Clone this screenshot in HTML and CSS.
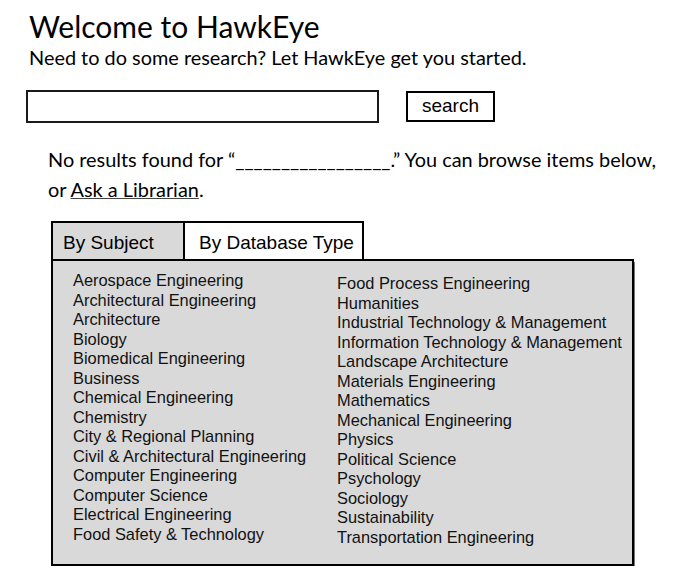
FILE: index.html
```html
<!DOCTYPE html>
<html>
<head>
<meta charset="utf-8">
<link rel="stylesheet" href="styles.css">
</head>
<body>
<div class="page">
  <h1 class="title">Welcome to HawkEye</h1>
  <p class="subtitle">Need to do some research? Let HawkEye get you started.</p>
  <div class="search-row">
    <div class="search-input"></div>
    <div class="search-btn">search</div>
  </div>
  <p class="notice">No results found for “_________________.” You can browse items below,<br>or <a class="link" href="#">Ask a Librarian</a>.</p>
  <div class="browser">
    <div class="tabs">
      <div class="tab tab-active">By Subject</div>
      <div class="tab tab-other">By Database Type</div>
      <div class="tab-fill"></div>
    </div>
    <div class="panel">
      <ul class="col col-left">
        <li>Aerospace Engineering</li>
        <li>Architectural Engineering</li>
        <li>Architecture</li>
        <li>Biology</li>
        <li>Biomedical Engineering</li>
        <li>Business</li>
        <li>Chemical Engineering</li>
        <li>Chemistry</li>
        <li>City &amp; Regional Planning</li>
        <li>Civil &amp; Architectural Engineering</li>
        <li>Computer Engineering</li>
        <li>Computer Science</li>
        <li>Electrical Engineering</li>
        <li>Food Safety &amp; Technology</li>
      </ul>
      <ul class="col col-right">
        <li>Food Process Engineering</li>
        <li>Humanities</li>
        <li>Industrial Technology &amp; Management</li>
        <li>Information Technology &amp; Management</li>
        <li>Landscape Architecture</li>
        <li>Materials Engineering</li>
        <li>Mathematics</li>
        <li>Mechanical Engineering</li>
        <li>Physics</li>
        <li>Political Science</li>
        <li>Psychology</li>
        <li>Sociology</li>
        <li>Sustainability</li>
        <li>Transportation Engineering</li>
      </ul>
    </div>
  </div>
</div>
</body>
</html>
```
FILE: styles.css
```css
html, body {
  margin: 0;
  padding: 0;
  background: #ffffff;
}
.page {
  padding: 8px 0 0 29px;
  color: #000;
}
.title {
  margin: 0;
  font-family: Lato, "Open Sans", sans-serif;
  font-weight: 400;
  font-size: 30px;
  line-height: 36px;
}
.subtitle {
  margin: 0;
  font-family: Lato, "Open Sans", sans-serif;
  font-size: 19.9px;
  line-height: 27px;
}
.search-row {
  display: flex;
  align-items: flex-start;
  margin: 19px 0 0 -3px;
}
.search-input {
  width: 349px;
  height: 29px;
  border: 2px solid #1a1a1a;
}
.search-btn {
  margin-left: 27px;
  margin-top: 1px;
  width: 85px;
  height: 27px;
  border: 2px solid #000;
  box-sizing: content-box;
  font-family: "Liberation Sans", Arial, sans-serif;
  font-size: 19px;
  line-height: 26px;
  text-align: center;
}
.notice {
  margin: 21px 0 0 19px;
  font-family: Lato, "Open Sans", sans-serif;
  font-size: 19.9px;
  line-height: 30px;
}
.link {
  color: #000;
  text-decoration: underline;
  text-decoration-color: #444;
}
.browser {
  margin: 17px 0 0 22px;
  width: 583px;
  font-family: "Liberation Sans", Arial, sans-serif;
}
.tabs {
  display: flex;
  height: 40px;
}
.tab {
  border: 2px solid #000;
  border-bottom: none;
  font-size: 19px;
  line-height: 36px;
  white-space: nowrap;
  box-sizing: border-box;
}
.tab-active {
  width: 134px;
  padding: 2px 0 0 10px;
  background: #d9d9d9;
  border-bottom: 2px solid #000;
  height: 40px;
}
.tab-other {
  width: 179px;
  padding: 2px 0 0 14px;
  background: #fff;
  border-left: none;
  border-bottom: 2px solid #000;
  height: 40px;
}
.tab-fill {
  flex: 1;
  border-bottom: 2px solid #000;
}
.panel {
  display: grid;
  grid-template-columns: 264px 1fr;
  height: 303px;
  background: #d9d9d9;
  border: 2px solid #000;
  border-top: none;
  box-shadow: 1px 1px 0 #777;
  padding-left: 20px;
}
.col {
  list-style: none;
  margin: 0;
  padding: 0;
  font-size: 16.4px;
  line-height: 19.5px;
  color: #111;
}
.col-left {
  padding-top: 10px;
}
.col-right {
  padding-top: 13px;
}
```
